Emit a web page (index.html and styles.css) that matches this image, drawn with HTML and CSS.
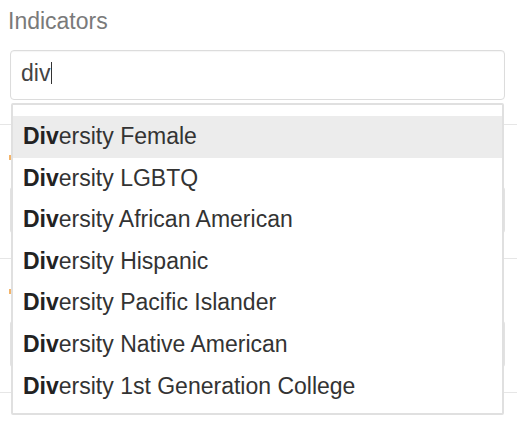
FILE: index.html
```html
<!DOCTYPE html>
<html>
<head>
<meta charset="utf-8">
<link rel="stylesheet" href="styles.css">
</head>
<body>
<div class="page">
  <div class="field">
    <div class="label">Indicators</div>
    <div class="control"><span class="typed">div</span><span class="caret"></span></div>
  </div>
  <div class="row">
    <span class="mark"></span>
    <div class="box"></div>
  </div>
  <div class="row">
    <span class="mark"></span>
    <div class="box"></div>
  </div>
  <div class="row last"></div>

  <ul class="menu">
    <li class="item active"><b>Div</b>ersity Female</li>
    <li class="item"><b>Div</b>ersity LGBTQ</li>
    <li class="item"><b>Div</b>ersity African American</li>
    <li class="item"><b>Div</b>ersity Hispanic</li>
    <li class="item"><b>Div</b>ersity Pacific Islander</li>
    <li class="item"><b>Div</b>ersity Native American</li>
    <li class="item"><b>Div</b>ersity 1st Generation College</li>
  </ul>
</div>
</body>
</html>
```

FILE: styles.css
```css
html, body {
  margin: 0;
  padding: 0;
  background: #fff;
}

body {
  font-family: "Liberation Sans", Arial, sans-serif;
  font-size: 23px;
  color: #333;
}

.page {
  position: relative;
  width: 517px;
  height: 422px;
  overflow: hidden;
}

.field {
  padding: 5px 12px 0 10px;
}

.label {
  line-height: 32px;
  color: #7a7a7a;
  margin-left: -2px;
}

.control {
  margin-top: 13px;
  height: 48px;
  border: 1px solid #dcdcdc;
  border-radius: 4px;
  display: flex;
  align-items: center;
  padding: 0 10px 5px;
  box-sizing: content-box;
  color: #444;
  box-shadow: inset 0 1px 1px rgba(0, 0, 0, 0.04);
}

.control {
  height: 43px;
}

.typed {
  line-height: 32px;
}

.caret {
  width: 1px;
  height: 22px;
  background: #333;
  margin-left: 1px;
}

.row {
  margin-top: 24px;
  border-top: 1px solid #e6e6e6;
  height: 134px;
  padding: 30px 12px 0 10px;
  box-sizing: border-box;
  position: relative;
}

.row + .row {
  margin-top: 0;
}

.row.last {
  height: 20px;
  padding: 0;
}

.mark {
  display: block;
  width: 2px;
  height: 5px;
  background: #f3b46a;
  margin-left: -1px;
}

.box {
  margin-top: 27px;
  height: 46px;
  border: 2px solid #e2e2e2;
  border-radius: 3px;
  box-sizing: border-box;
}

.menu {
  position: absolute;
  top: 103px;
  left: 11px;
  width: 493px;
  height: 312px;
  box-sizing: border-box;
  margin: 0;
  padding: 11px 0 0;
  list-style: none;
  background: #fff;
  border: 2px solid #e0e0e0;
  border-radius: 2px;
}

.item {
  height: 41.6px;
  line-height: 41.6px;
  padding: 0 10px;
  color: #333;
  white-space: nowrap;
}

.item b {
  font-weight: bold;
  color: #222;
}

.item.active {
  background: #ececec;
}
```
